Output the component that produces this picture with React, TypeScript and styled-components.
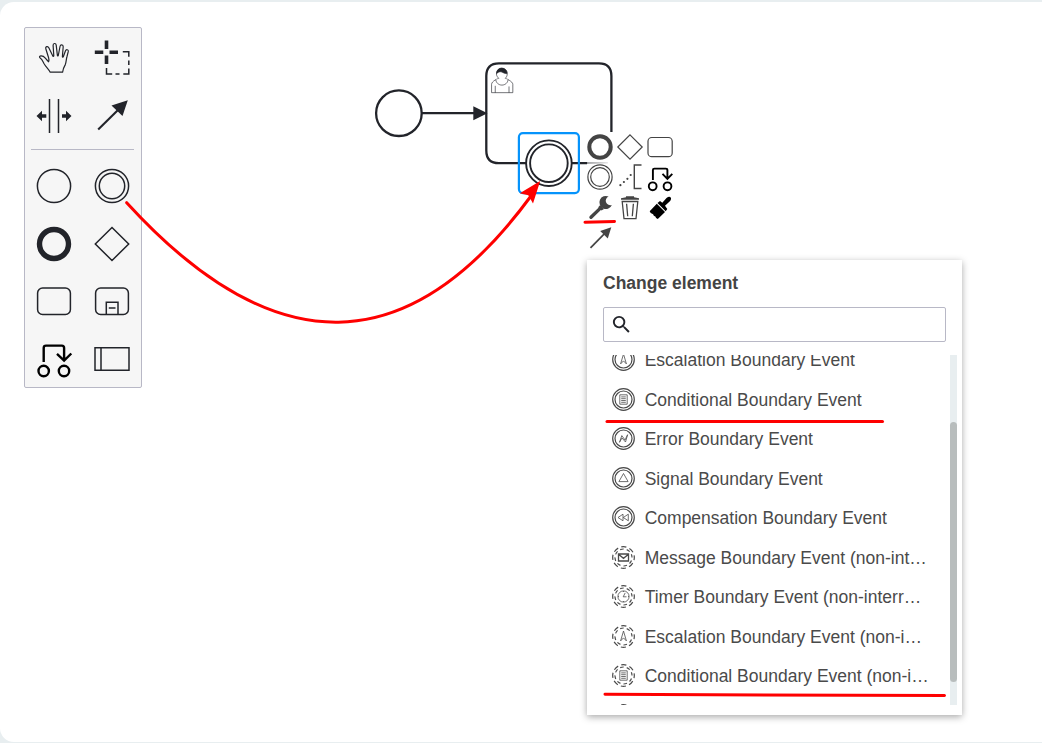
import React from "react";
import styled, { createGlobalStyle } from "styled-components";

const ink = "#22242a";
const grey = "#444444";
const line = "#b8b8c6";

const GlobalStyle = createGlobalStyle`
  html, body { margin: 0; padding: 0; background: #e8eef0; overflow: hidden; }
  * { box-sizing: border-box; }
`;

const Page = styled.div`
  width: 1042px;
  height: 743px;
  padding: 2px 0 1px;
  background: #e8eef0;
  position: relative;
  font-family: "Liberation Sans", Arial, sans-serif;
  font-size: 17.5px;
  color: ${grey};
  overflow: hidden;
`;

const Board = styled.main`
  height: 740px;
  padding: 25px 24px;
  background: #fff;
  border-radius: 14px 0 0 14px;
`;

const Palette = styled.aside`
  width: 118px;
  height: 361px;
  padding-top: 1.5px;
  background: #f6f6f6;
  border: 1px solid ${line};
  border-radius: 2px;
`;

const ToolGroup = styled.div`
  display: grid;
  grid-template-columns: 58px 57px;
  grid-auto-rows: 57.5px;
`;

const Separator = styled.hr`
  height: 1px;
  margin: 4.7px 7px 7.4px 6px;
  border: 0;
  background: ${line};
`;

const Tool = styled.button`
  display: flex;
  align-items: center;
  justify-content: center;
  padding: 0;
  border: 0;
  background: none;
`;

const Glyph = styled.svg<{ $size: number; $color?: string; $weight?: number }>`
  display: block;
  flex: none;
  width: ${(p) => p.$size}px;
  height: ${(p) => p.$size}px;
  overflow: visible;
  fill: none;
  stroke: ${(p) => p.$color ?? ink};
  stroke-width: ${(p) => p.$weight ?? 1.5};
`;

const Overlay = styled.svg`
  position: absolute;
  inset: 0;
  width: 1042px;
  height: 743px;
  fill: none;
  pointer-events: none;
`;

const ContextPad = styled.div`
  position: absolute;
  left: 585.3px;
  top: 132.3px;
  display: grid;
  grid-template-columns: repeat(3, 30px);
  grid-auto-rows: 30.1px;
`;

const Popup = styled.section`
  position: absolute;
  left: 587px;
  top: 260px;
  width: 375px;
  height: 455px;
  padding: 12px 5px 10px 16px;
  display: flex;
  flex-direction: column;
  background: #fff;
  box-shadow: 0 2px 7px rgba(0, 0, 0, 0.34);
`;

const Title = styled.h3`
  margin: 0 0 12px;
  height: 23px;
  font-size: 17.5px;
  line-height: 23px;
  font-weight: 700;
`;

const SearchBox = styled.div`
  width: 343px;
  height: 35px;
  padding-left: 6px;
  display: flex;
  align-items: center;
  border: 1px solid ${line};
  border-radius: 2px;
`;

const Results = styled.div`
  display: flex;
  justify-content: space-between;
  height: 350px;
  margin-top: 13px;
`;

const List = styled.ul`
  width: 343px;
  height: 350px;
  margin: 0;
  padding: 0;
  overflow: hidden;
  list-style: none;

  &::before {
    content: "";
    display: block;
    margin-top: -15.2px;
  }
`;

const Entry = styled.li`
  display: flex;
  align-items: center;
  gap: 9.4px;
  height: 39.5px;
  padding-left: 9.3px;
  white-space: nowrap;
`;

const Label = styled.span`
  padding-top: 1.1px;
  line-height: 24px;
  color: #4a4a4a;
`;

const Track = styled.div`
  width: 7px;
  padding-top: 67px;
  background: #e8eef0;
`;

const Thumb = styled.div`
  height: 260px;
  border-radius: 3.5px;
  background: #b8bdbd;
`;

const paletteTop: React.ReactNode[] = [
  <path
    key="hand"
    strokeWidth="1.2"
    strokeLinejoin="round"
    d="M-3.8 14.2H8.6C9 11 10 8.800 11.300 6.600C12.200 4.500 12.200 1 13 -1.500L14.300 -6.600C14.600 -8.500 12.200 -9 11.500 -7.200L9.300 -1.200C9 -.5 8.300 -.8 8.400 -1.500L9.200 -11.300C9.200 -13.600 6.400 -13.800 6 -11.500L4.300 -2.500C4.200 -1.900 3.400 -2 3.400 -2.600L2.200 -12.900C1.900 -15.200 -1 -15 -.9 -12.600L-.2 -2.300C-.2 -1.500 -1 -1.400 -1.200 -2L-5.200 -10.300C-6.200 -12.400 -8.900 -11.300 -8.200 -9.200L-5.400 -.2C-5 1.100 -4.900 2.600 -5.400 3.800C-6.600 2.900 -7.600 1.500 -8.700 .1C-9.800 -1.300 -11.600 -2.200 -13.200 -2.100C-14.700 -1.900 -14.900 -.8 -13.800 0C-12 1.200 -11.300 3 -10.200 5.300C-8.400 8.600 -5.400 11.200 -3.800 14.200Z"
  />,
  <g key="lasso">
    <path strokeWidth="3.6" d="M-17.200 -5.800h8.500M-2.500 -5.800h8.500M-5.500 -17.500v8.500M-5.500 -2.600v8.500" />
    <path d="M10.800 -6.300h6v5M16.800 2.500v4.500M16.800 10.400v5.500h-5.500M7.500 15.900H3.500M.2 15.900h-5.700v-6" />
  </g>,
  <g key="space">
    <path d="M-4.500 -17v34M4.500 -17v34" />
    <path fill={ink} stroke="none" d="M-17.500 0L-12 -5.200V-1.700H-7.700V1.700H-12V5.200ZM17.500 0L12 -5.200V-1.700H8V1.700H12V5.200Z" />
  </g>,
  <g key="connect">
    <path strokeWidth="2.1" d="M-13.800 13.500L6 -6" />
    <path fill={ink} stroke="none" d="M15.800 -15.800L-.5 -10.500L10.500 0Z" />
  </g>,
];

const paletteBottom: React.ReactNode[] = [
  <circle key="start" r="16.600" />,
  <g key="intermediate">
    <circle r="16.600" />
    <circle r="12.700" />
  </g>,
  <circle key="end" r="14.500" strokeWidth="5.400" />,
  <path key="gateway" d="M0 -16.500L16.700 0L0 16.500L-16.700 0Z" />,
  <rect key="task" x="-16.400" y="-13" width="32.800" height="26.400" rx="5" />,
  <g key="subprocess">
    <rect x="-16.400" y="-13" width="32.800" height="26.400" rx="5" />
    <path d="M-5.700 13.400V1.200H6V13.400M-3.200 7H3.500" />
  </g>,
  <g key="switch" stroke="#000" strokeWidth="2.400">
    <circle cx="-10.300" cy="12" r="5.200" />
    <circle cx="10" cy="12" r="5.200" />
    <path d="M-10.300 3V-11Q-10.300 -13.400 -8 -13.400H7.800Q10.100 -13.400 10.100 -11V1M3 -5.200L10.100 1.500L17.300 -5.500" />
  </g>,
  <path key="participant" d="M-17 -11.300H17V11.200H-17ZM-11 -11.300V11.200" />,
];

const padTools: React.ReactNode[] = [
  <circle key="end" r="10.700" strokeWidth="4" />,
  <path key="gateway" d="M0 -12.200L12.200 0L0 12.200L-12.200 0Z" />,
  <rect key="task" x="-12" y="-9.500" width="24.200" height="19.200" rx="3.800" />,
  <g key="intermediate">
    <circle r="12.100" />
    <circle r="9.300" />
  </g>,
  <g key="annotation">
    <path strokeWidth="1.400" d="M11.500 -12H4.300V11.500H11.500" />
    <path strokeWidth="2.200" strokeLinecap="round" d="M-9.600 8.200h.01M-6.100 5h.01M-2.600 1.800h.01M.7 -2h.01" />
  </g>,
  <g key="switch" stroke="#000" strokeWidth="1.900" transform="translate(.2 1.100)">
    <circle cx="-7.500" cy="8.200" r="3.900" />
    <circle cx="7.300" cy="8.200" r="3.900" />
    <path d="M-7.300 2V-8Q-7.300 -9.500 -5.800 -9.500H5.600Q7.200 -9.500 7.200 -8V.5M2.300 -4.200L7.200 .8L12.100 -4.200" />
  </g>,
  <g key="wrench">
    <path strokeWidth="3.400" strokeLinecap="round" d="M-9 9.300L.2 .4" />
    <path fill={grey} stroke="none" d="M8.600 -11.500A6.500 6.500 0 1 0 11.900 -3.100A4.400 4.400 0 1 1 8.600 -11.500Z" />
    <path fill={grey} stroke="none" d="M.2 -3L4 1L1.500 2.500L-1.800 -.8Z" />
  </g>,
  <g key="trash">
    <path fill={grey} stroke="none" d="M-9 -8.300V-9.800L-4 -10.700V-11.700H4V-10.700L9 -9.800V-8.300Z" />
    <path strokeWidth="1.300" d="M-7.800 -6.500H7.800L6 10.700H-6ZM-3.400 -4.200L-2.300 8.300M3.400 -4.200L2.300 8.300" />
  </g>,
  <g key="brush" fill="#000" stroke="none">
    <path d="M-10.300 3.300L-3.200 -4.200L5 4L-2.200 10.900Q-4.500 10.300 -4.600 8.400Q-6.500 8.500 -6.900 6.300Q-9.500 6.200 -10.300 3.300Z" />
    <path d="M-2.500 -4.900L0 -7L2.300 -5.200L6.500 -10Q9.300 -12.200 10.700 -10.600Q11.800 -9 9.600 -6.500L5 -2.300L7.300 1L5.700 3.300Z" />
  </g>,
  <g key="connect">
    <path strokeWidth="1.700" d="M-9.500 9.800L5 -4.900" />
    <path fill={grey} stroke="none" d="M11.300 -10.700L.2 -7.100L7.800 .5Z" />
  </g>,
];

type EventKind = "escalation" | "conditional" | "error" | "signal" | "compensation" | "message" | "timer";

const markers: Record<EventKind, React.ReactNode> = {
  escalation: <path d="M0 -5.500L2.900 4.400L0 1.400L-2.900 4.400Z" />,
  conditional: <path d="M-3.700 -4.700H3.700V4.700H-3.700ZM-2.300 -2.600H2.300M-2.300 -.8H2.300M-2.300 1H2.300M-2.300 2.800H2.300" />,
  error: <path d="M-4 3.800L-1.700 -2.900L1.500 1.500L4.100 -3.800L2 3.500L-1.500 -.5Z" />,
  signal: <path d="M0 -5L4.600 3.100H-4.600Z" />,
  compensation: <path d="M-5.500 0L-.5 -3.300V3.300ZM-.2 0L4.800 -3.300V3.300Z" />,
  message: <path strokeWidth="1.300" d="M-5 -3.500H5V3.500H-5ZM-5 -3.300L0 .8L5 -3.300" />,
  timer: (
    <g>
      <circle r="5.600" />
      <path d="M-.3 .3H3M-.3 .3L1.700 -3.600M0 -5.500v1M0 4.500v1M-5.500 0h1M4.500 0h1" />
    </g>
  ),
};

const entries: { kind: EventKind; label: string; dashed?: boolean }[] = [
  { kind: "escalation", label: "Escalation Boundary Event" },
  { kind: "conditional", label: "Conditional Boundary Event" },
  { kind: "error", label: "Error Boundary Event" },
  { kind: "signal", label: "Signal Boundary Event" },
  { kind: "compensation", label: "Compensation Boundary Event" },
  { kind: "message", label: "Message Boundary Event (non-int…", dashed: true },
  { kind: "timer", label: "Timer Boundary Event (non-interr…", dashed: true },
  { kind: "escalation", label: "Escalation Boundary Event (non-i…", dashed: true },
  { kind: "conditional", label: "Conditional Boundary Event (non-i…", dashed: true },
];

function EventRing({ kind, dashed }: { kind?: EventKind; dashed?: boolean }) {
  return (
    <Glyph $size={23} $color="#4a4a4a" $weight={1.2} viewBox="-11.5 -11.5 23 23">
      <circle r="10.800" strokeDasharray={dashed ? "5.2 3.282" : undefined} strokeDashoffset={dashed ? 19.563 : undefined} />
      <circle r="8.500" strokeDasharray={dashed ? "3.6 3.076" : undefined} strokeDashoffset={dashed ? 17 : undefined} />
      <g strokeWidth=".8">{kind && markers[kind]}</g>
    </Glyph>
  );
}

function Diagram() {
  return (
    <Overlay viewBox="0 0 1042 743" stroke={ink} strokeWidth="2.300">
      <defs>
        <linearGradient id="edgeFade" x1="584" x2="608" y1="0" y2="0" gradientUnits="userSpaceOnUse">
          <stop offset="0" stopColor={ink} />
          <stop offset=".2" stopColor={ink} stopOpacity=".5" />
          <stop offset="1" stopColor={ink} stopOpacity=".1" />
        </linearGradient>
      </defs>
      <circle cx="398.900" cy="113.200" r="22.800" />
      <path d="M422 113.200H475" />
      <path d="M473.300 106.300L487.500 113.200L473.300 120.200Z" fill={ink} stroke="none" />
      <path d="M611.400 132V76Q611.400 63.300 599 63.300H499Q486.300 63.300 486.300 76V150.500Q486.300 163.200 499 163.200H587" />
      <path d="M587 162.900L608 162.800" stroke="url(#edgeFade)" strokeWidth="1.500" />
      <g transform="translate(486.5 63.3) scale(1.25)" strokeWidth=".5" fill="#fff">
        <path d="m15,12 c 0.909,-0.845 1.594,-2.049 1.594,-3.385 0,-2.554 -1.805,-4.622 -4.357,-4.622 -2.552,0 -4.288,2.068 -4.288,4.622 0,1.348 0.974,2.562 1.896,3.405 -0.529,0.187 -5.669,2.097 -5.794,4.756 v 6.718 h 17 v -6.718 c 0,-2.298 -5.528,-4.595 -6.051,-4.776 z m -8,6 l 0,5.5 m 11,0 l 0,-5" />
        <path d="m15,12 m 2.162,1.009 c 0,2.447 -2.158,4.431 -4.821,4.431 -2.662,0 -4.821,-1.984 -4.821,-4.431" />
        <path fill={ink} d="m15,12 m -6.900,-3.800 c 0,0 2.251,-2.358 4.274,-1.177 2.024,1.181 4.221,1.537 4.124,0.965 -0.098,-0.570 -0.117,-3.791 -4.191,-4.136 -3.572,-0.001 -4.275,3.012 -4.207,4.348 z" />
      </g>
      <circle cx="548.900" cy="163.200" r="22.800" fill="#fff" strokeWidth="1.900" />
      <circle cx="548.900" cy="163.200" r="18.800" strokeWidth="1.900" />
      <rect x="518.900" y="133.100" width="60" height="60" rx="4" stroke="#0593fb" strokeWidth="2.200" />
    </Overlay>
  );
}

function Annotations() {
  return (
    <Overlay viewBox="0 0 1042 743" stroke="#fe0000" strokeWidth="3" strokeLinecap="round">
      <path d="M126.700 202.700Q348 445 531 196" />
      <path d="M540.200 181L519.800 193.200L528.300 195.300L533 203.500Z" fill="#fe0000" stroke="none" />
      <path d="M585 222.200L614.500 221.400" />
      <path d="M607 421.500H882.500" />
      <path d="M605 694.300L944.500 695.600" />
    </Overlay>
  );
}

export default function App() {
  return (
    <Page>
      <GlobalStyle />
      <Board>
        <Palette>
          <ToolGroup>
            {paletteTop.map((icon, i) => (
              <Tool key={i}>
                <Glyph $size={40} viewBox="-20 -20 40 40">{icon}</Glyph>
              </Tool>
            ))}
          </ToolGroup>
          <Separator />
          <ToolGroup>
            {paletteBottom.map((icon, i) => (
              <Tool key={i}>
                <Glyph $size={40} viewBox="-20 -20 40 40">{icon}</Glyph>
              </Tool>
            ))}
          </ToolGroup>
        </Palette>
      </Board>
      <Diagram />
      <ContextPad>
        {padTools.map((icon, i) => (
          <Tool key={i}>
            <Glyph $size={28} $color={grey} $weight={1.2} viewBox="-14 -14 28 28">{icon}</Glyph>
          </Tool>
        ))}
      </ContextPad>
      <Popup>
        <Title>Change element</Title>
        <SearchBox>
          <Glyph $size={23} viewBox="0 0 24 24">
            <path
              fill={ink}
              stroke="none"
              d="M15.500 14h-.79l-.28-.27A6.471 6.471 0 0 0 16 9.500 6.500 6.500 0 1 0 9.500 16c1.610 0 3.090-.59 4.230-1.570l.27.28v.79l5 4.990L20.490 19l-4.990-5zm-6 0C7.010 14 5 11.990 5 9.500S7.010 5 9.500 5 14 7.010 14 9.500 11.990 14 9.500 14z"
            />
          </Glyph>
        </SearchBox>
        <Results>
          <List>
            {entries.map((entry) => (
              <Entry key={entry.label}>
                <EventRing kind={entry.kind} dashed={entry.dashed} />
                <Label>{entry.label}</Label>
              </Entry>
            ))}
            <Entry>
              <EventRing dashed />
            </Entry>
          </List>
          <Track>
            <Thumb />
          </Track>
        </Results>
      </Popup>
      <Annotations />
    </Page>
  );
}
